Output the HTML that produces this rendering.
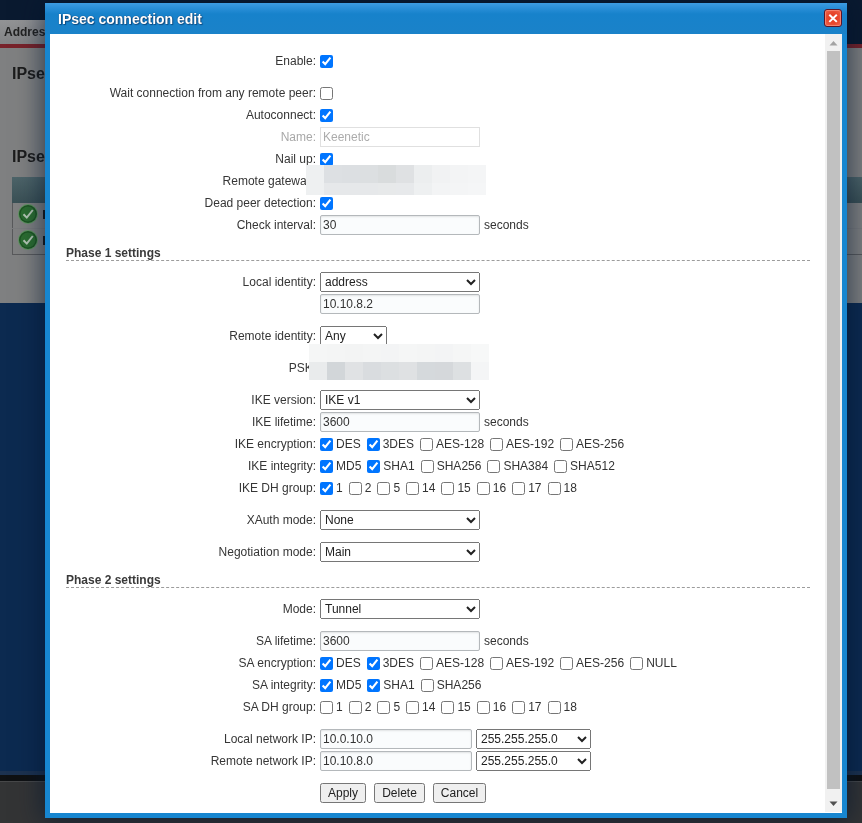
<!DOCTYPE html>
<html><head><meta charset="utf-8">
<style>
html,body{margin:0;padding:0;width:862px;height:823px;overflow:hidden;background:#6e6f71;font-family:"Liberation Sans",sans-serif;}
.abs{position:absolute;}
#wrap{position:absolute;left:0;top:0;width:862px;height:823px;will-change:transform;}
#bgtop{left:0;top:0;width:862px;height:45px;background:#0a1a30;}
#tab{left:0;top:20px;width:60px;height:25px;background:linear-gradient(#929395,#828385);}
#tabtxt{left:4px;top:25px;font-size:12px;font-weight:bold;line-height:14px;color:#222;}
#red{left:0;top:44px;width:862px;height:4px;background:#78222a;}
#gray{left:0;top:48px;width:862px;height:255px;background:#7f8081;}
#h1{left:12px;top:64px;font-size:16px;font-weight:bold;line-height:19px;color:#1c1c1c;}
#h2{left:12px;top:147px;font-size:16px;font-weight:bold;line-height:19px;color:#1c1c1c;}
#thead{left:12px;top:177px;width:900px;height:26px;background:linear-gradient(#4d6469,#3a5055);}
#tbody{left:12px;top:203px;width:900px;height:52px;box-sizing:border-box;border:1px solid #58595b;border-top:0;}
#trow{left:12px;top:228px;width:900px;height:1px;background:#7a7b7d;}
.ico{position:absolute;left:18px;width:20px;height:20px;}
#navy{left:0;top:303px;width:862px;height:468px;background:#0c2a50;}
#navl{left:0;top:771px;width:862px;height:4px;background:#1c3250;}
#blk{left:0;top:775px;width:862px;height:6px;background:#0f1113;}
#dk{left:0;top:781px;width:862px;height:42px;background:#333435;border-top:1px solid #474849;}
#shadow{left:0;top:0;width:862px;height:823px;}
#dlg{left:45px;top:3px;width:802px;height:815px;background:#1786d0;box-shadow:0 0 24px 3px rgba(0,20,45,.6);}
#titlebar{left:45px;top:3px;width:802px;height:31px;background:linear-gradient(#3d9ce2 0px,#2d91da 4px,#1782cb 11px,#1a82c9 31px);}
#title{left:58px;top:11px;color:#fff;text-shadow:0 0 1px rgba(0,30,70,.9),1px 1px 1px rgba(0,30,70,.5);font-weight:bold;font-size:14px;line-height:16px;}
#body{left:50px;top:34px;width:792px;height:779px;background:#fff;}
#close{left:824px;top:9px;width:18px;height:18px;box-sizing:border-box;background:radial-gradient(circle at 50% 50%,#e2361c 0,#e8492f 50%,#f06a55 100%);border:1px solid #5a1428;border-radius:3px;box-shadow:inset 0 0 0 1px #f3836f;}
#sb{left:825px;top:34px;width:17px;height:778px;background:#f1f1f1;}
#thumb{left:827px;top:51px;width:13px;height:738px;background:#c1c1c1;}
.lbl{position:absolute;right:546px;font-size:12px;line-height:14px;color:#363636;white-space:nowrap;}
.dis{color:#a8a8a8;}
.txt{position:absolute;font-size:12px;line-height:14px;color:#333;white-space:nowrap;}
.cbx{position:absolute;margin:0;width:13px;height:13px;}
.cbrow{position:absolute;left:314px;font-size:12px;line-height:14px;color:#333;white-space:nowrap;}
.icb{margin:1px 3px 0 6px;width:13px;height:13px;vertical-align:top;}
.inp{position:absolute;box-sizing:border-box;height:20px;border:1px solid #b4b8bb;border-radius:2px;background:#fafcfd;box-shadow:inset 0 1px 2px rgba(0,0,0,.10);font-size:12px;line-height:18px;color:#333;padding-left:2px;white-space:nowrap;}
.disin{color:#acacac;background:#fff;border-color:#e0e0e0;border-radius:0;box-shadow:none;}
.sel{position:absolute;box-sizing:border-box;margin:0;height:20px;font-family:"Liberation Sans",sans-serif;font-size:12px;color:#222;}
.hd{position:absolute;left:66px;font-size:12px;font-weight:bold;line-height:14px;color:#3a3a3a;}
.dash{position:absolute;left:66px;width:744px;height:0;border-top:1px dashed #9c9c9c;}
.btn{position:absolute;box-sizing:border-box;margin:0;padding:0;height:20px;font-family:"Liberation Sans",sans-serif;font-size:12px;color:#222;}
</style></head><body><div id="wrap">
<div id="bgtop" class="abs"></div>
<div id="tab" class="abs"></div>
<div id="tabtxt" class="abs">Address</div>
<div id="red" class="abs"></div>
<div id="gray" class="abs"></div>
<div id="h1" class="abs">IPsec</div>
<div id="h2" class="abs">IPsec</div>
<div id="thead" class="abs"></div>
<div id="tbody" class="abs"></div>
<div id="trow" class="abs"></div>
<svg class="ico" style="top:204px" viewBox="0 0 20 20"><circle cx="10" cy="10" r="10" fill="#5f9460"/><circle cx="10" cy="10" r="9" fill="#1d5522"/><circle cx="10" cy="10" r="7.5" fill="#2b6d30"/><path d="M5.5 10.2 L8.8 13.6 L14.8 6" stroke="#b5c7b5" stroke-width="2" fill="none"/></svg>
<svg class="ico" style="top:230px" viewBox="0 0 20 20"><circle cx="10" cy="10" r="10" fill="#5f9460"/><circle cx="10" cy="10" r="9" fill="#1d5522"/><circle cx="10" cy="10" r="7.5" fill="#2b6d30"/><path d="M5.5 10.2 L8.8 13.6 L14.8 6" stroke="#b5c7b5" stroke-width="2" fill="none"/></svg>
<div class="abs" style="left:43px;top:210px;width:2px;height:9px;background:#1a1a1a"></div>
<div class="abs" style="left:43px;top:236px;width:2px;height:9px;background:#1a1a1a"></div>
<div id="navy" class="abs"></div>
<div id="navl" class="abs"></div>
<div id="blk" class="abs"></div>
<div id="dk" class="abs"></div>
<div id="dlg" class="abs"></div>
<div id="titlebar" class="abs"></div>
<div id="title" class="abs">IPsec connection edit</div>
<div id="close" class="abs"><svg width="16" height="16" style="position:absolute;left:0;top:0" viewBox="0 0 16 16"><path d="M4.3 4.7 L11.8 11.9 M11.8 4.7 L4.3 11.9" stroke="#fff" stroke-width="2" stroke-linecap="butt"/></svg></div>
<div id="body" class="abs"></div>
<div id="sb" class="abs"></div>
<div id="thumb" class="abs"></div>
<svg class="abs" style="left:829px;top:40px" width="9" height="6" viewBox="0 0 9 6"><path d="M0.5 5.5 L4.5 1 L8.5 5.5 Z" fill="#a3a3a3"/></svg>
<svg class="abs" style="left:829px;top:801px" width="9" height="6" viewBox="0 0 9 6"><path d="M0.5 0.5 L4.5 5 L8.5 0.5 Z" fill="#505050"/></svg>
<div class="lbl " style="top:54px">Enable:</div>
<input type="checkbox" class="cbx" style="top:55px;left:320px" checked>
<div class="lbl " style="top:86px">Wait connection from any remote peer:</div>
<input type="checkbox" class="cbx" style="top:87px;left:320px">
<div class="lbl " style="top:108px">Autoconnect:</div>
<input type="checkbox" class="cbx" style="top:109px;left:320px" checked>
<div class="lbl dis" style="top:130px">Name:</div>
<div class="inp disin" style="top:127px;left:320px;width:160px">Keenetic</div>
<div class="lbl " style="top:152px">Nail up:</div>
<input type="checkbox" class="cbx" style="top:153px;left:320px" checked>
<div class="lbl " style="top:174px">Remote gateway:</div>
<div class="lbl " style="top:196px">Dead peer detection:</div>
<input type="checkbox" class="cbx" style="top:197px;left:320px" checked>
<div class="lbl " style="top:218px">Check interval:</div>
<div class="inp " style="top:215px;left:320px;width:160px">30</div>
<div class="txt" style="top:218px;left:484px">seconds</div>
<div class="hd" style="top:246px">Phase 1 settings</div><div class="dash" style="top:260px"></div>
<div class="lbl " style="top:275px">Local identity:</div>
<select class="sel" style="top:272px;left:320px;width:160px"><option>address</option></select>
<div class="inp " style="top:294px;left:320px;width:160px">10.10.8.2</div>
<div class="lbl " style="top:329px">Remote identity:</div>
<select class="sel" style="top:326px;left:320px;width:67px"><option>Any</option></select>
<div class="lbl " style="top:361px">PSK:</div>
<div class="lbl " style="top:393px">IKE version:</div>
<select class="sel" style="top:390px;left:320px;width:160px"><option>IKE v1</option></select>
<div class="lbl " style="top:415px">IKE lifetime:</div>
<div class="inp " style="top:412px;left:320px;width:160px">3600</div>
<div class="txt" style="top:415px;left:484px">seconds</div>
<div class="lbl " style="top:437px">IKE encryption:</div>
<div class="cbrow" style="top:437px"><input type="checkbox" class="icb" checked>DES<input type="checkbox" class="icb" checked>3DES<input type="checkbox" class="icb">AES-128<input type="checkbox" class="icb">AES-192<input type="checkbox" class="icb">AES-256</div>
<div class="lbl " style="top:459px">IKE integrity:</div>
<div class="cbrow" style="top:459px"><input type="checkbox" class="icb" checked>MD5<input type="checkbox" class="icb" checked>SHA1<input type="checkbox" class="icb">SHA256<input type="checkbox" class="icb">SHA384<input type="checkbox" class="icb">SHA512</div>
<div class="lbl " style="top:481px">IKE DH group:</div>
<div class="cbrow" style="top:481px"><input type="checkbox" class="icb" checked>1<input type="checkbox" class="icb">2<input type="checkbox" class="icb">5<input type="checkbox" class="icb">14<input type="checkbox" class="icb">15<input type="checkbox" class="icb">16<input type="checkbox" class="icb">17<input type="checkbox" class="icb">18</div>
<div class="lbl " style="top:513px">XAuth mode:</div>
<select class="sel" style="top:510px;left:320px;width:160px"><option>None</option></select>
<div class="lbl " style="top:545px">Negotiation mode:</div>
<select class="sel" style="top:542px;left:320px;width:160px"><option>Main</option></select>
<div class="hd" style="top:573px">Phase 2 settings</div><div class="dash" style="top:587px"></div>
<div class="lbl " style="top:602px">Mode:</div>
<select class="sel" style="top:599px;left:320px;width:160px"><option>Tunnel</option></select>
<div class="lbl " style="top:634px">SA lifetime:</div>
<div class="inp " style="top:631px;left:320px;width:160px">3600</div>
<div class="txt" style="top:634px;left:484px">seconds</div>
<div class="lbl " style="top:656px">SA encryption:</div>
<div class="cbrow" style="top:656px"><input type="checkbox" class="icb" checked>DES<input type="checkbox" class="icb" checked>3DES<input type="checkbox" class="icb">AES-128<input type="checkbox" class="icb">AES-192<input type="checkbox" class="icb">AES-256<input type="checkbox" class="icb">NULL</div>
<div class="lbl " style="top:678px">SA integrity:</div>
<div class="cbrow" style="top:678px"><input type="checkbox" class="icb" checked>MD5<input type="checkbox" class="icb" checked>SHA1<input type="checkbox" class="icb">SHA256</div>
<div class="lbl " style="top:700px">SA DH group:</div>
<div class="cbrow" style="top:700px"><input type="checkbox" class="icb">1<input type="checkbox" class="icb">2<input type="checkbox" class="icb">5<input type="checkbox" class="icb">14<input type="checkbox" class="icb">15<input type="checkbox" class="icb">16<input type="checkbox" class="icb">17<input type="checkbox" class="icb">18</div>
<div class="lbl " style="top:732px">Local network IP:</div>
<div class="inp " style="top:729px;left:320px;width:152px">10.0.10.0</div>
<select class="sel" style="top:729px;left:476px;width:115px"><option>255.255.255.0</option></select>
<div class="lbl " style="top:754px">Remote network IP:</div>
<div class="inp " style="top:751px;left:320px;width:152px">10.10.8.0</div>
<select class="sel" style="top:751px;left:476px;width:115px"><option>255.255.255.0</option></select>
<button class="btn" style="top:783px;left:320px;width:46px">Apply</button>
<button class="btn" style="top:783px;left:374px;width:51px">Delete</button>
<button class="btn" style="top:783px;left:433px;width:53px">Cancel</button>
<div class="abs" style="left:306px;top:165px;width:18px;height:18px;background:#eef0f1"></div><div class="abs" style="left:324px;top:165px;width:18px;height:18px;background:#dde0e3"></div><div class="abs" style="left:342px;top:165px;width:18px;height:18px;background:#dcdfe2"></div><div class="abs" style="left:360px;top:165px;width:18px;height:18px;background:#dcdfe1"></div><div class="abs" style="left:378px;top:165px;width:18px;height:18px;background:#d9dcdd"></div><div class="abs" style="left:396px;top:165px;width:18px;height:18px;background:#dfe1e3"></div><div class="abs" style="left:414px;top:165px;width:18px;height:18px;background:#eceeef"></div><div class="abs" style="left:432px;top:165px;width:18px;height:18px;background:#f1f2f3"></div><div class="abs" style="left:450px;top:165px;width:18px;height:18px;background:#f3f4f5"></div><div class="abs" style="left:468px;top:165px;width:18px;height:18px;background:#f4f5f6"></div><div class="abs" style="left:306px;top:183px;width:18px;height:12px;background:#eef0f1"></div><div class="abs" style="left:324px;top:183px;width:18px;height:12px;background:#e6e8ea"></div><div class="abs" style="left:342px;top:183px;width:18px;height:12px;background:#e6e8ea"></div><div class="abs" style="left:360px;top:183px;width:18px;height:12px;background:#e6e8ea"></div><div class="abs" style="left:378px;top:183px;width:18px;height:12px;background:#e7e9ea"></div><div class="abs" style="left:396px;top:183px;width:18px;height:12px;background:#e7e9eb"></div><div class="abs" style="left:414px;top:183px;width:18px;height:12px;background:#eef0f1"></div><div class="abs" style="left:432px;top:183px;width:18px;height:12px;background:#f3f4f5"></div><div class="abs" style="left:450px;top:183px;width:18px;height:12px;background:#f4f5f6"></div><div class="abs" style="left:468px;top:183px;width:18px;height:12px;background:#f5f6f7"></div><div class="abs" style="left:309px;top:344px;width:18px;height:18px;background:#f5f6f6"></div><div class="abs" style="left:327px;top:344px;width:18px;height:18px;background:#f4f5f5"></div><div class="abs" style="left:345px;top:344px;width:18px;height:18px;background:#f3f4f4"></div><div class="abs" style="left:363px;top:344px;width:18px;height:18px;background:#f4f5f5"></div><div class="abs" style="left:381px;top:344px;width:18px;height:18px;background:#f3f4f5"></div><div class="abs" style="left:399px;top:344px;width:18px;height:18px;background:#f5f6f6"></div><div class="abs" style="left:417px;top:344px;width:18px;height:18px;background:#f4f5f5"></div><div class="abs" style="left:435px;top:344px;width:18px;height:18px;background:#f3f4f5"></div><div class="abs" style="left:453px;top:344px;width:18px;height:18px;background:#f5f6f6"></div><div class="abs" style="left:471px;top:344px;width:18px;height:18px;background:#f7f8f8"></div><div class="abs" style="left:309px;top:362px;width:18px;height:18px;background:#e9ebec"></div><div class="abs" style="left:327px;top:362px;width:18px;height:18px;background:#d2d6d9"></div><div class="abs" style="left:345px;top:362px;width:18px;height:18px;background:#e0e2e4"></div><div class="abs" style="left:363px;top:362px;width:18px;height:18px;background:#d9dcdf"></div><div class="abs" style="left:381px;top:362px;width:18px;height:18px;background:#dcdfe1"></div><div class="abs" style="left:399px;top:362px;width:18px;height:18px;background:#dfe1e3"></div><div class="abs" style="left:417px;top:362px;width:18px;height:18px;background:#d5d9dc"></div><div class="abs" style="left:435px;top:362px;width:18px;height:18px;background:#d5d8db"></div><div class="abs" style="left:453px;top:362px;width:18px;height:18px;background:#dde0e2"></div><div class="abs" style="left:471px;top:362px;width:18px;height:18px;background:#f4f5f6"></div>
</div></body></html>
